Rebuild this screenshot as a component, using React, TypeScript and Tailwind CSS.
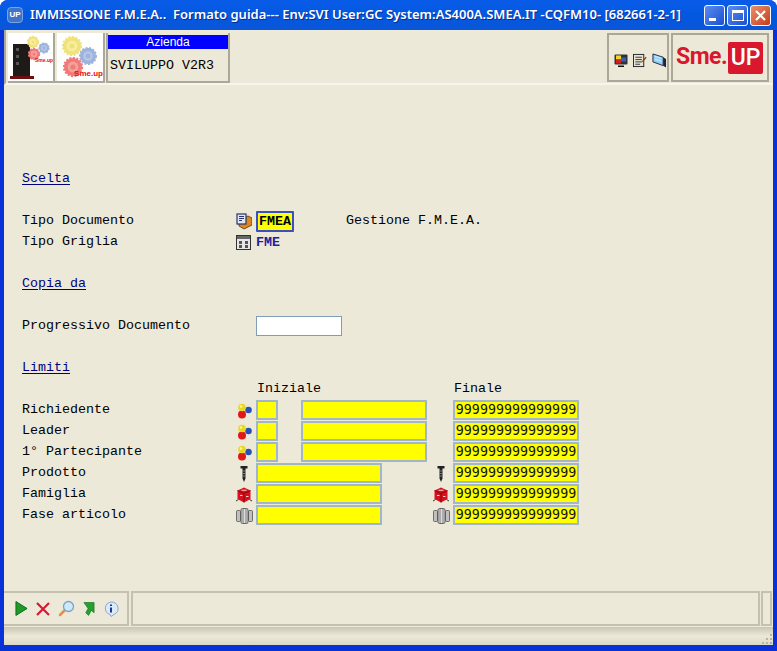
import React from 'react';

const mono = "font-['Liberation_Mono','Courier_New',monospace] text-[13.33px]";
const yellowBox = 'h-5 mb-[1px] bg-[#ffff00] border-2 border-[#a1b6c8]';

function Gear({ x, y, r, fill, inner }: { x: number; y: number; r: number; fill: string; inner: string }) {
    return (
        <g>
            <circle cx={x} cy={y} r={r} fill={fill} stroke={fill} strokeWidth={r * 0.25} strokeDasharray="2 1.5" />
            <circle cx={x} cy={y} r={r * 0.6} fill={inner} />
            <circle cx={x} cy={y} r={r * 0.28} fill={fill} />
        </g>
    );
}

function ServerLogo() {
    return (
        <div className="w-[45px] h-12 bg-white relative overflow-hidden shrink-0">
            <svg width="45" height="48" viewBox="0 0 45 48">
                <path d="M5 11h17v32H5z" fill="#1d1a18" />
                <path d="M2 43h24v3H2z" fill="#6a1010" />
                <path d="M8 15h3v3H8zM8 22h3v3H8zM8 29h3v3H8z" fill="#555" />
                <Gear x={25} y={9} r={5.5} fill="#f0e27a" inner="#f6eda0" />
                <Gear x={36} y={15} r={5} fill="#9db2dc" inner="#b6c6e6" />
                <Gear x={26} y={21} r={5.5} fill="#f07a78" inner="#f4a09c" />
            </svg>
            <span className="absolute right-0 top-[24px] text-[5px] font-bold text-[#e01010] font-['Liberation_Sans',sans-serif]">Sme.up</span>
        </div>
    );
}

function GearsLogo() {
    return (
        <div className="w-[46px] h-12 bg-white relative overflow-hidden shrink-0">
            <svg width="46" height="48" viewBox="0 0 46 48">
                <Gear x={15} y={13} r={9} fill="#f0e27a" inner="#f6eda0" />
                <Gear x={31} y={23} r={8} fill="#9db2dc" inner="#b6c6e6" />
                <Gear x={16} y={34} r={9} fill="#f07a78" inner="#f4a09c" />
            </svg>
            <span className="absolute right-0 top-[36px] text-[8px] leading-[10px] font-bold text-[#e80d0d] font-['Liberation_Sans',sans-serif]">Sme.up</span>
        </div>
    );
}

function Balls() {
    return (
        <svg width="16" height="16" viewBox="0 0 16 16">
            <circle cx="12.500" cy="7" r="3.300" fill="#2a4fb8" />
            <circle cx="6" cy="11.500" r="4" fill="#e01818" />
            <circle cx="6" cy="4.500" r="3.800" fill="#e8d820" />
            <circle cx="5" cy="3.500" r="1.200" fill="#fff6a0" />
        </svg>
    );
}

function Screw() {
    return (
        <svg width="16" height="18" viewBox="0 0 16 18">
            <path d="M4.500 1h7v2.500H9.500v10L8 17l-1.500-3.500v-10h-2z" fill="#222" />
            <path d="M6.500 6h3M6.500 8.500h3M6.500 11h3" stroke="#aaa" strokeWidth="0.7" />
        </svg>
    );
}

function RedBox() {
    return (
        <svg width="16" height="16" viewBox="0 0 16 16">
            <path d="M8 0.500l6.500 3v8.500L8 15.500 1.500 12V3.500z" fill="#d8101c" />
            <path d="M1.500 3.500L8 6.500l6.500-3M8 6.500v9" stroke="#70080c" strokeWidth="0.8" fill="none" />
            <path d="M5.500 3.300h5M4 8.500h2.500M10 9.500h2.500" stroke="#f8d0d0" strokeWidth="1.100" />
            <path d="M0 14l2.500-1.500M16 14l-2.500-1.500" stroke="#333" strokeWidth="1" />
        </svg>
    );
}

function Bearing() {
    return (
        <svg width="17" height="16" viewBox="0 0 17 16">
            <rect x="0.500" y="2.500" width="4" height="11" rx="1" fill="#c0c0c0" stroke="#444" strokeWidth="0.7" />
            <rect x="12.500" y="2.500" width="4" height="11" rx="1" fill="#c0c0c0" stroke="#444" strokeWidth="0.7" />
            <rect x="5" y="0.500" width="7" height="15" rx="1.500" fill="#dcdcdc" stroke="#444" strokeWidth="0.8" />
            <path d="M7 1v14M10 1v14" stroke="#666" strokeWidth="0.8" />
        </svg>
    );
}

function DocBox() {
    return (
        <svg width="16" height="17" viewBox="0 0 16 17">
            <path d="M3 7l9-4 4 2v7l-8 4-5-3z" fill="#e0861a" stroke="#5a3204" strokeWidth="0.8" />
            <rect x="1" y="1" width="9" height="10" fill="#dfe6f5" stroke="#27346e" strokeWidth="1.200" />
            <path d="M3 3.500h5M3 5.500h5M3 7.500h3" stroke="#27346e" strokeWidth="1" />
        </svg>
    );
}

function GridIcon() {
    return (
        <svg width="15" height="15" viewBox="0 0 15 15">
            <rect x="0.500" y="0.500" width="14" height="14" fill="#e8e8e8" stroke="#333" />
            <path d="M1 1h13v3H1z" fill="#666" />
            <path d="M3 6h3v3H3zM9 6h3v3H9zM3 10h3v3H3zM9 10h3v3H9z" fill="#555" />
        </svg>
    );
}

function Row({ label, icon, children }: { label?: string; icon?: React.ReactNode; children?: React.ReactNode }) {
    return (
        <div className="flex items-center h-[21px]">
            <div className="w-[213px] shrink-0 pb-[2px] whitespace-pre text-black">{label}</div>
            <div className="w-[21px] shrink-0 flex items-center pl-[1px]">{icon}</div>
            {children}
        </div>
    );
}

function Heading({ children }: { children: React.ReactNode }) {
    return (
        <div className="flex items-center h-[21px] pb-[2px] text-[#000080] underline underline-offset-2">{children}</div>
    );
}

function Nines({ icon, left }: { icon?: React.ReactNode; left: React.ReactNode }) {
    return (
        <>
            <div className="w-[177px] shrink-0 flex gap-[23px]">{left}</div>
            <div className="w-5 shrink-0 flex items-center">{icon}</div>
            <div className={`${yellowBox} w-[126px] flex items-center justify-center overflow-hidden font-['DejaVu_Sans_Mono',monospace] text-[13.33px] text-[#111]`}>999999999999999</div>
        </>
    );
}

export default function App() {
    return (
        <div className="w-[777px] h-[651px] overflow-hidden flex flex-col bg-[#0831d9] rounded-t-lg font-['Liberation_Sans',sans-serif]">
            {/* Title bar */}
            <div className="h-[30px] shrink-0 flex items-center pl-[7px] pr-[6px] bg-gradient-to-b from-[#0a5ce8] via-[#0258e0] to-[#0a56d8]">
                <div className="w-[16px] h-[16px] rounded-sm bg-[#3f73c8] border border-[#7ea3e0] text-white text-[8px] font-bold flex items-center justify-center shrink-0">UP</div>
                <div className="ml-[7px] flex-1 text-white text-[13px] font-semibold font-['Noto_Sans',sans-serif] whitespace-pre [text-shadow:1px_1px_#0a2a90]">IMMISSIONE F.M.E.A..  Formato guida--- Env:SVI User:GC System:AS400A.SMEA.IT -CQFM10- [682661-2-1]</div>
                <div className="flex gap-[2px]">
                    <div className="w-[21px] h-[21px] rounded-[3px] border border-white bg-gradient-to-br from-[#5a8cf0] to-[#1c4fd0] flex items-end pl-1 pb-1">
                        <div className="w-[7px] h-[3px] bg-white" />
                    </div>
                    <div className="w-[21px] h-[21px] rounded-[3px] border border-white bg-gradient-to-br from-[#5a8cf0] to-[#1c4fd0] flex items-center justify-center">
                        <div className="w-[12px] h-[11px] border border-white border-t-[3px]" />
                    </div>
                    <div className="w-[21px] h-[21px] rounded-[3px] border border-white bg-gradient-to-br from-[#e8906c] to-[#c8380c] flex items-center justify-center">
                        <svg width="13" height="13" viewBox="0 0 13 13"><path d="M2 2l9 9M11 2l-9 9" stroke="#fff" strokeWidth="2.200" /></svg>
                    </div>
                </div>
            </div>

            <div className="flex-1 mx-1 mb-[6px] bg-[#ece9d8] flex flex-col min-h-0">
                {/* Toolbar */}
                <div className="h-[55px] shrink-0 flex items-start pt-[3px] border-b-2 border-[#f8f6ec] border-l-2 border-l-[#aca899]">
                    <div className="flex pl-[2px]">
                        <div className="border-2 border-[#aca899] border-t-0 border-l-0"><ServerLogo /></div>
                        <div className="border-2 border-[#aca899] border-t-0 border-l-0 pl-[2px]"><GearsLogo /></div>
                        <div className="w-[124px] h-[50px] ml-[1px] border-2 border-[#aca899] border-t-0 flex flex-col">
                            <div className="h-[14px] mt-[2px] bg-[#0000ff] text-white text-[12px] leading-[14px] text-center">Azienda</div>
                            <div className={`${mono} pl-[2px] pt-[7px] text-black`}>SVILUPPO V2R3</div>
                        </div>
                    </div>
                    <div className="flex-1" />
                    <div className="w-[62px] h-[49px] border-2 border-[#aca899] flex items-center gap-[5px] pl-[5px] pt-[6px]">
                        <svg width="15" height="15" viewBox="0 0 14 14">
                            <rect x="0.500" y="1" width="13" height="10" rx="1" fill="#333" />
                            <rect x="2" y="2" width="5" height="4" fill="#f0d820" />
                            <rect x="2" y="6" width="5" height="4" fill="#d02020" />
                            <rect x="7" y="4" width="5" height="4" fill="#3060c0" />
                            <path d="M4 12h6v1.500H4z" fill="#111" />
                        </svg>
                        <svg width="15" height="15" viewBox="0 0 15 15">
                            <rect x="0.500" y="1" width="11" height="13" fill="#e8e4d4" stroke="#222" />
                            <path d="M2.500 4h7M2.500 6.500h7M2.500 9h7M2.500 11.500h5" stroke="#333" />
                            <path d="M10 9l4-5" stroke="#8a4a10" strokeWidth="1.500" />
                        </svg>
                        <svg width="16" height="17" viewBox="0 0 16 17">
                            <path d="M1 1.500l11 3.500v9L1 10z" fill="#8fd0f4" stroke="#224" strokeWidth="1" />
                            <path d="M3 4l7 2.200M3 7l7 2.200" stroke="#d8f0fc" />
                            <path d="M12 5l3 2v9l-3-2z" fill="#223" />
                        </svg>
                    </div>
                    <div className="w-[98px] h-[49px] ml-[2px] mr-1 border-2 border-[#aca899] flex items-center pl-[3px]">
                        <span className="text-[#d9182d] text-[23px] leading-none tracking-[-0.5px] font-bold font-['Roboto',sans-serif] -mt-[2px] w-[52px]">Sme.</span>
                        <span className="w-[35px] h-8 mt-[1px] rounded-[2px] bg-[#d9182d] text-white text-[23px] font-medium font-['Roboto',sans-serif] flex items-center justify-center">UP</span>
                    </div>
                </div>

                {/* Form */}
                <div className={`flex-1 pt-[84px] pl-[18px] ${mono}`}>
                    <Heading>Scelta</Heading>
                    <div className="h-[21px]" />
                    <Row label="Tipo Documento" icon={<DocBox />}>
                        <div className="w-[38px] h-[21px] border-2 border-[#3a4fc0] bg-[#ffff00] rounded-[1px] flex items-center justify-center font-bold text-black">FMEA</div>
                        <div className="ml-[52px] whitespace-pre text-black pb-[2px]">Gestione F.M.E.A.</div>
                    </Row>
                    <Row label="Tipo Griglia" icon={<GridIcon />}>
                        <div className="font-bold text-[#2020a0]">FME</div>
                    </Row>
                    <div className="h-[21px]" />
                    <Heading>Copia da</Heading>
                    <div className="h-[21px]" />
                    <Row label="Progressivo Documento">
                        <div className="w-[86px] h-5 mb-[1px] bg-white border border-[#7f9db9]" />
                    </Row>
                    <div className="h-[21px]" />
                    <Heading>Limiti</Heading>
                    <Row>
                        <div className="w-[197px] shrink-0 pb-[2px] pl-[1px] text-black">Iniziale</div>
                        <div className="pb-[2px] pl-[1px] text-black">Finale</div>
                    </Row>
                    <Row label="Richiedente" icon={<Balls />}>
                        <Nines left={<><div className={`${yellowBox} w-[22px]`} /><div className={`${yellowBox} w-[126px]`} /></>} />
                    </Row>
                    <Row label="Leader" icon={<Balls />}>
                        <Nines left={<><div className={`${yellowBox} w-[22px]`} /><div className={`${yellowBox} w-[126px]`} /></>} />
                    </Row>
                    <Row label="1° Partecipante" icon={<Balls />}>
                        <Nines left={<><div className={`${yellowBox} w-[22px]`} /><div className={`${yellowBox} w-[126px]`} /></>} />
                    </Row>
                    <Row label="Prodotto" icon={<Screw />}>
                        <Nines icon={<Screw />} left={<div className={`${yellowBox} w-[126px]`} />} />
                    </Row>
                    <Row label="Famiglia" icon={<RedBox />}>
                        <Nines icon={<RedBox />} left={<div className={`${yellowBox} w-[126px]`} />} />
                    </Row>
                    <Row label="Fase articolo" icon={<Bearing />}>
                        <Nines icon={<Bearing />} left={<div className={`${yellowBox} w-[126px]`} />} />
                    </Row>
                </div>

                {/* Command bar */}
                <div className="h-[35px] shrink-0 flex gap-[2px] pr-[1px]">
                    <div className="w-[125px] border-2 border-[#c4c1b0] border-l-0 flex items-center gap-[8px] pl-[11px]">
                        <svg width="13" height="17" viewBox="0 0 14 17"><path d="M1 1l12 7.500L1 16z" fill="#1f9a2a" stroke="#0c6a16" /></svg>
                        <svg width="14" height="14" viewBox="0 0 14 14"><path d="M1 1l12 12M13 1L1 13" stroke="#d81830" strokeWidth="2.200" /></svg>
                        <svg width="17" height="17" viewBox="0 0 17 17">
                            <path d="M2 15l5-5" stroke="#e09048" strokeWidth="2.500" strokeLinecap="round" />
                            <circle cx="10.500" cy="6.500" r="5" fill="#cfe8fa" stroke="#7aa4c8" strokeWidth="1.300" />
                        </svg>
                        <svg width="12" height="16" viewBox="0 0 13 16"><path d="M1 1h11v11l-3-2.500-3 5.500-3-3 2.500-4.500z" fill="#28a030" stroke="#14701c" strokeWidth="0.700" /></svg>
                        <svg width="16" height="16" viewBox="0 0 16 16">
                            <path d="M8 1a7 6.500 0 0 1 3 12.400L8 15.500l-1-2A7 6.500 0 0 1 8 1z" fill="#dce9f8" stroke="#8aa8d0" />
                            <path d="M8 3.500v1.500M8 6.500v5" stroke="#1a3a9a" strokeWidth="2" />
                        </svg>
                    </div>
                    <div className="flex-1 border-2 border-[#c4c1b0]" />
                    <div className="w-[11px] border-2 border-[#c4c1b0] -ml-[1px]" />
                </div>

                {/* Status bar */}
                <div className="h-[18px] shrink-0 mt-[1px] bg-gradient-to-b from-[#c9c6b6] via-[#ece9d8] to-[#dcd8c4] flex items-end justify-end">
                    <svg width="12" height="12" viewBox="0 0 12 12">
                        <path d="M9 1h2v2H9zM5 5h2v2H5zM9 5h2v2H9zM1 9h2v2H1zM5 9h2v2H5zM9 9h2v2H9z" fill="#b8b4a0" />
                    </svg>
                </div>
            </div>
        </div>
    );
}
